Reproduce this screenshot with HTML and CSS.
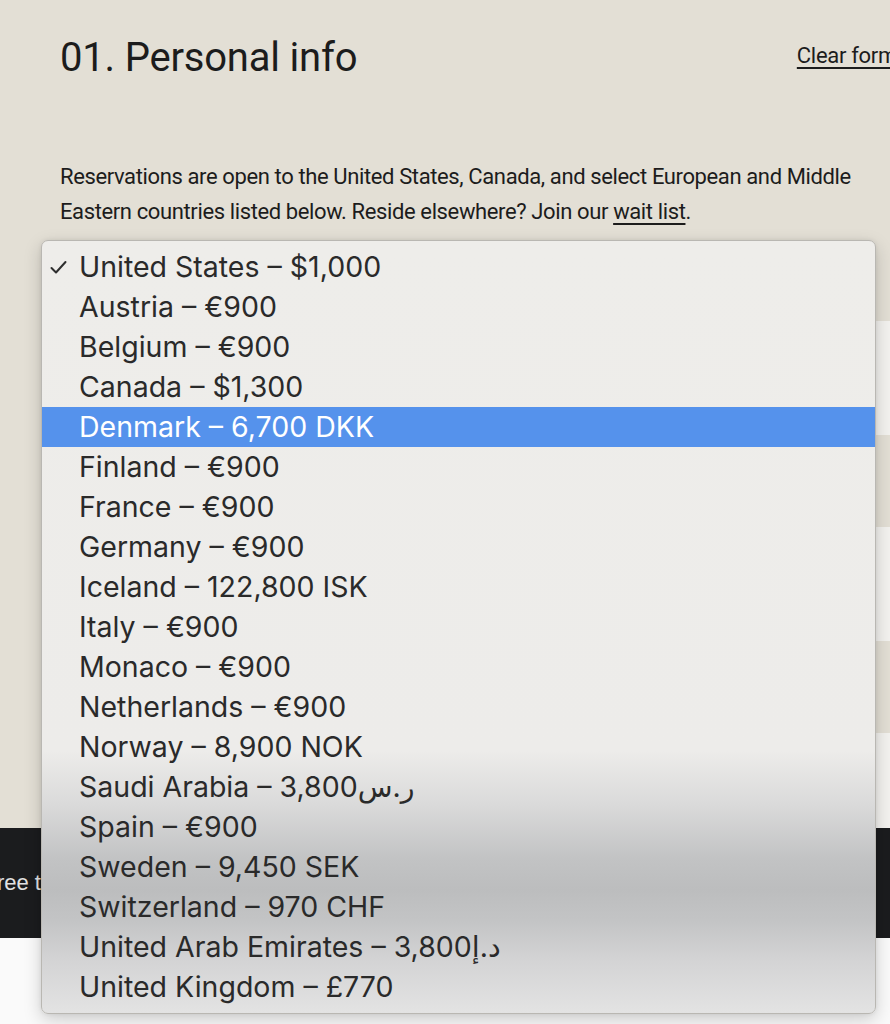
FILE: index.html
```html
<!DOCTYPE html>
<html lang="en">
<head>
    <meta charset="UTF-8">
    <meta name="viewport" content="width=device-width, initial-scale=1.0">
    <title>Reservation</title>
    <link rel="stylesheet" href="styles.css">
</head>
<body>
    <div class="page">
        <section class="personal">
            <div class="head">
                <h1>01. Personal info</h1>
                <a class="clear" href="#">Clear form</a>
            </div>
            <p class="intro">Reservations are open to the United States, Canada, and select European and Middle Eastern countries listed below. Reside elsewhere? Join our <a href="#">wait list</a>.</p>
            <div class="fields">
                <div class="field"></div>
                <div class="field"></div>
                <div class="field short"></div>
            </div>
        </section>

        <div class="agree"><span>Agree to the terms</span></div>
        <div class="after"></div>

        <!-- open country dropdown -->
        <ul class="menu">
            <li class="checked">
                <svg class="check" width="17" height="15" viewBox="0 0 17 15"><polyline points="1.5,8 6,12.5 15.5,2" fill="none" stroke="#2e2e2e" stroke-width="2" stroke-linecap="round" stroke-linejoin="round"/></svg>
                United States – $1,000
            </li>
            <li>Austria – €900</li>
            <li>Belgium – €900</li>
            <li>Canada – $1,300</li>
            <li class="active">Denmark – 6,700 DKK</li>
            <li>Finland – €900</li>
            <li>France – €900</li>
            <li>Germany – €900</li>
            <li>Iceland – 122,800 ISK</li>
            <li>Italy – €900</li>
            <li>Monaco – €900</li>
            <li>Netherlands – €900</li>
            <li>Norway – 8,900 NOK</li>
            <li>Saudi Arabia – 3,800ر.س</li>
            <li>Spain – €900</li>
            <li>Sweden – 9,450 SEK</li>
            <li>Switzerland – 970 CHF</li>
            <li>United Arab Emirates – 3,800د.إ</li>
            <li>United Kingdom – £770</li>
        </ul>
    </div>
</body>
</html>
```

FILE: styles.css
```css
html, body {
    margin: 0;
    padding: 0;
    overflow: hidden;
    background-color: #fafafa;
}
.page {
    position: relative;
    width: 890px;
    height: 1024px;
    overflow: hidden;
}
.personal {
    background-color: #e3dfd5;
    width: 960px;
    height: 828px;
    padding: 38px 63px 0 60px;
    box-sizing: border-box;
    color: #1c1c1c;
    font-family: "Roboto", "Liberation Sans", sans-serif;
}
.head {
    display: flex;
    justify-content: space-between;
    align-items: flex-start;
}
.head h1 {
    margin: 0;
    font-weight: normal;
    font-size: 40px;
    line-height: 39px;
    letter-spacing: -0.2px;
}
.clear {
    margin-top: 5px;
    font-size: 22px;
    color: #1c1c1c;
    text-decoration: underline;
    text-underline-offset: 4px;
    letter-spacing: -0.3px;
}
.intro {
    margin: 82px 0 0 0;
    font-size: 22px;
    line-height: 35px;
    letter-spacing: -0.38px;
    max-width: 800px;
}
.intro a {
    color: #1c1c1c;
    text-underline-offset: 4px;
}
.fields {
    display: flex;
    flex-direction: column;
    gap: 92px;
    margin-top: 92px;
}
.field {
    height: 114px;
    background-color: #f3f2ef;
}
.field.short {
    height: 95px;
}
.agree {
    height: 110px;
    background-color: #1b1c1e;
    display: flex;
    align-items: center;
    overflow: hidden;
}
.agree span {
    margin-left: -30px;
    font-family: "Liberation Sans", Arial, sans-serif;
    font-size: 22px;
    color: #e2e2e2;
    white-space: nowrap;
}
.after {
    height: 86px;
    background-color: #fafafa;
}

/* dropdown */
.menu {
    position: absolute;
    left: 41px;
    top: 240px;
    width: 835px;
    height: 774px;
    box-sizing: border-box;
    margin: 0;
    padding: 6px 0;
    list-style: none;
    border: 1px solid #b9b7b2;
    border-radius: 7px;
    background: linear-gradient(to bottom,
        #eeedea 0%,
        #edecea 66%,
        #dadada 73%,
        #c2c3c4 80%,
        #bcbdbe 84%,
        #c3c4c5 88%,
        #d3d3d4 93%,
        #e3e3e3 100%);
    box-shadow: 0 6px 18px rgba(0, 0, 0, 0.18), 0 0 4px rgba(0, 0, 0, 0.08);
    font-family: "Inter", "Noto Sans", "DejaVu Sans", sans-serif;
    font-size: 28.5px;
    color: #2a2a2a;
}
.menu li {
    position: relative;
    height: 40px;
    line-height: 40px;
    padding-left: 37px;
    white-space: nowrap;
}
.menu li.active {
    background-color: #5592ec;
    color: #fff;
}
.check {
    position: absolute;
    left: 8px;
    top: 13px;
}
```
